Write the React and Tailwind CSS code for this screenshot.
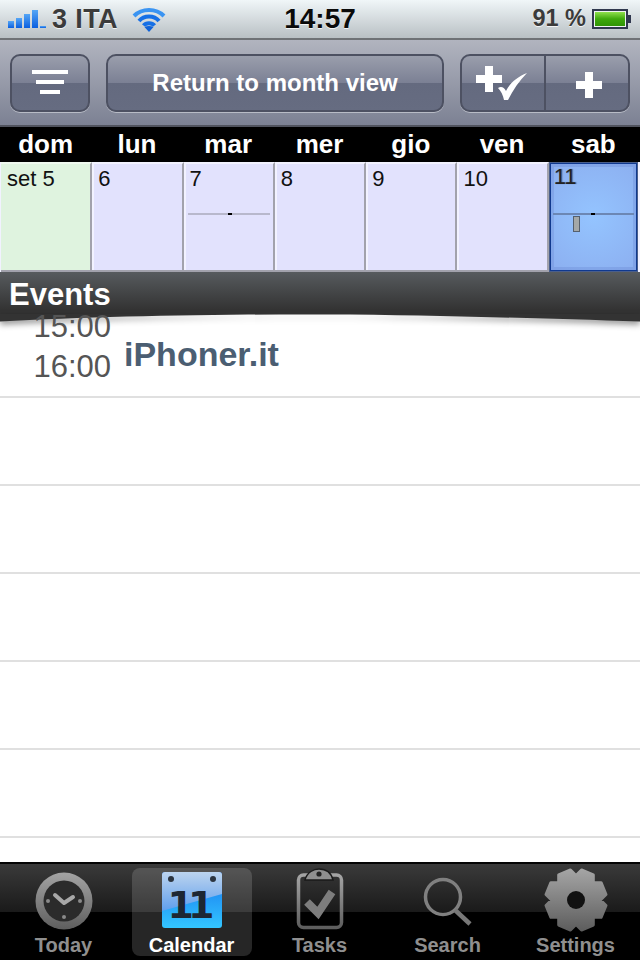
import React from "react";

const gearPath = (() => {
  const cx = 64, cy = 32, teeth = 8, pts = [];
  for (let i = 0; i < teeth; i++) {
    const a = (i / teeth) * Math.PI * 2 + Math.PI / 8 - Math.PI / 2;
    const step = (Math.PI * 2) / teeth;
    [[-0.5, 24.5], [-0.27, 30.5], [0.27, 30.5], [0.5, 24.5]].forEach(([o, r]) => {
      pts.push([cx + r * Math.cos(a + o * step), cy + r * Math.sin(a + o * step)]);
    });
  }
  return "M" + pts.map((p) => p[0].toFixed(1) + " " + p[1].toFixed(1)).join("L") + "Z";
})();

const GreyDefs = ({ id }) => (
  <defs>
    <linearGradient id={id} x1="0" y1="0" x2="0" y2="1">
      <stop offset="0" stopColor="#a4a4a4" />
      <stop offset="1" stopColor="#5e5e5e" />
    </linearGradient>
  </defs>
);

function ClockIcon() {
  return (
    <svg width="128" height="64" viewBox="0 0 128 64" className="block">
      <GreyDefs id="clockG" />
      <circle cx="64" cy="33" r="28.5" fill="url(#clockG)" />
      <circle cx="64" cy="33" r="20.5" fill="#2b2b2b" />
      <path d="M55 27 L64 35 L73 29" fill="none" stroke="#a8a8a8" strokeWidth="4" strokeLinecap="round" strokeLinejoin="round" />
      <circle cx="48" cy="33" r="2" fill="#8a8a8a" />
      <circle cx="80" cy="33" r="2" fill="#8a8a8a" />
      <circle cx="64" cy="49" r="2" fill="#8a8a8a" />
    </svg>
  );
}

function CalendarIcon() {
  return (
    <svg width="128" height="64" viewBox="0 0 128 64" className="block">
      <defs>
        <linearGradient id="calTop" x1="0" y1="0" x2="0" y2="1">
          <stop offset="0" stopColor="#bcd4ef" />
          <stop offset="1" stopColor="#5f9eec" />
        </linearGradient>
        <linearGradient id="calBot" x1="0" y1="0" x2="0" y2="1">
          <stop offset="0" stopColor="#1673ee" />
          <stop offset="1" stopColor="#33c6ff" />
        </linearGradient>
      </defs>
      <rect x="34" y="4" width="60" height="56" rx="3" fill="url(#calBot)" />
      <path d="M34 7a3 3 0 0 1 3-3h54a3 3 0 0 1 3 3v19L34 43Z" fill="url(#calTop)" />
      <circle cx="43" cy="11" r="3" fill="#2b3440" />
      <circle cx="85" cy="11" r="3" fill="#2b3440" />
      <text x="39.5" y="50" fontFamily="'DejaVu Sans', sans-serif" fontWeight="700" fontSize="38" letterSpacing="-5.9" fill="#1d2733">11</text>
    </svg>
  );
}

function TasksIcon() {
  return (
    <svg width="128" height="64" viewBox="0 0 128 64" className="block">
      <GreyDefs id="taskG" />
      <rect x="42.5" y="7" width="43" height="52.5" rx="5" fill="none" stroke="url(#taskG)" strokeWidth="3.5" />
      <path d="M49 12 C51 4 58 1 63 1 C69 1 75 4 77 12 Z" fill="#8f8f8f" stroke="#1a1a1a" strokeWidth="1.5" />
      <circle cx="63" cy="6" r="2.6" fill="#222" />
      <path d="M51 34 L62 45 L76 24" fill="none" stroke="#7d7d7d" strokeWidth="8" />
    </svg>
  );
}

function SearchIcon() {
  return (
    <svg width="128" height="64" viewBox="0 0 128 64" className="block">
      <circle cx="59" cy="29" r="17.5" fill="none" stroke="#808080" strokeWidth="3.5" />
      <path d="M71 42 L86 56" stroke="#787878" strokeWidth="4.5" />
    </svg>
  );
}

function GearIcon() {
  return (
    <svg width="128" height="64" viewBox="0 0 128 64" className="block">
      <GreyDefs id="gearG" />
      <path d={gearPath} fill="url(#gearG)" stroke="url(#gearG)" strokeWidth="3" strokeLinejoin="round" />
      <circle cx="64" cy="32" r="9" fill="#111" />
    </svg>
  );
}

const tabs = [
  { label: "Today", Icon: ClockIcon },
  { label: "Calendar", Icon: CalendarIcon, active: true },
  { label: "Tasks", Icon: TasksIcon },
  { label: "Search", Icon: SearchIcon },
  { label: "Settings", Icon: GearIcon },
];

const days = ["dom", "lun", "mar", "mer", "gio", "ven", "sab"];
const cells = ["set 5", "6", "7", "8", "9", "10", "11"];

const btn =
  "h-[58px] rounded-[10px] border-2 border-[#4d5162] bg-[linear-gradient(to_bottom,#9a9eac_0%,#7b8094_50%,#646a7f_50%,#666c81_100%)] shadow-[0_1px_0_#b8bcc6]";

function Cell({ text, i }) {
  if (i === 6) {
    return (
      <div className="relative h-[110px] w-[89px] border-2 border-[#10398f] outline outline-1 -outline-offset-1 outline-[#4a5f8c] bg-[radial-gradient(circle_at_50%_50%,#94c4ff_0%,#8caff0_100%)] pl-[3px] text-[22px] leading-[26px] text-[#222] shadow-[inset_0_0_0_3px_rgba(90,120,200,0.25)] [text-shadow:1px_0_1px_rgba(0,0,0,0.4)]">
        {text}
        <span className="absolute left-[2px] right-[2px] top-[49px] h-[2px] bg-[#6c87b4]" />
        <span className="absolute left-[40px] top-[49px] h-[2px] w-[4px] bg-black" />
        <span className="absolute left-[22px] top-[52px] h-[16px] w-[7px] border border-[#55606e] bg-[#a4a8a8]" />
      </div>
    );
  }
  return (
    <div
      className={`relative h-[110px] border-r-2 border-b-2 border-[#a2a2ac] pl-[6px] pt-px text-[22px] leading-[28px] text-[#111] ${
        i === 0
          ? "border-t-2 border-t-[#eef8ee] bg-[#dff3df]"
          : "border-t-2 border-t-[#f2f2ff] bg-[#e2e2fd] shadow-[inset_2px_0_0_#f2f2ff]"
      }`}
    >
      {text}
      {i === 2 && (
        <>
          <span className="absolute left-[4px] right-[3px] top-[49px] h-[2px] bg-[#b8b8cc]" />
          <span className="absolute left-[44px] top-[49px] h-[2px] w-[4px] bg-black" />
        </>
      )}
    </div>
  );
}

export default function App() {
  return (
    <div className="relative flex h-[960px] w-[640px] flex-col overflow-hidden bg-white font-['Liberation_Sans',Arial,sans-serif]">
      {/* Status bar */}
      <div className="grid h-[40px] shrink-0 grid-cols-[1fr_auto_1fr] items-center border-b-2 border-[#6f7276] bg-[linear-gradient(to_bottom,#f0f6f8,#b9c0c4)] px-2 [text-shadow:0_1px_0_rgba(255,255,255,0.8)]">
        <div className="flex items-center">
          <svg width="38" height="20" viewBox="0 0 38 20" className="block">
            <defs>
              <linearGradient id="sig" x1="0" y1="0" x2="0" y2="1">
                <stop offset="0" stopColor="#55a6f5" />
                <stop offset="1" stopColor="#0a5fe0" />
              </linearGradient>
            </defs>
            <rect x="0" y="12" width="6" height="7" fill="url(#sig)" />
            <rect x="8" y="9" width="6" height="10" fill="url(#sig)" />
            <rect x="16" y="5" width="6" height="14" fill="url(#sig)" />
            <rect x="24" y="1" width="6" height="18" fill="url(#sig)" />
            <rect x="32" y="17" width="6" height="2" fill="url(#sig)" />
          </svg>
          <span className="ml-[6px] text-[27px] font-bold leading-none tracking-[0.4px] text-[#3b3b3b]">3 ITA</span>
          <svg width="34" height="26" viewBox="0 0 34 26" className="ml-[14px] mt-[1px] block">
            <g fill="none" stroke="#1670e6" strokeWidth="4">
              <path d="M2 9 C10 1 24 1 32 9" stroke="#3a94f2" />
              <path d="M7 14 C12 8 22 8 27 14" />
              <path d="M11.5 18.5 C14 15.5 20 15.5 22.5 18.5" />
            </g>
            <path d="M17 25 L12.5 20 C15 18.5 19 18.5 21.5 20 Z" fill="#0f62d8" />
          </svg>
        </div>
        <span className="text-[28px] font-bold leading-none text-[#0a0a0a]">14:57</span>
        <div className="flex items-center justify-end">
          <span className="text-[23.5px] font-bold leading-none text-[#3b3b3b]">91 %</span>
          <svg width="40" height="22" viewBox="0 0 40 22" className="ml-[6px] block">
            <defs>
              <linearGradient id="bat" x1="0" y1="0" x2="0" y2="1">
                <stop offset="0" stopColor="#8fe04d" />
                <stop offset="0.5" stopColor="#3ea80c" />
                <stop offset="1" stopColor="#2f9405" />
              </linearGradient>
            </defs>
            <rect x="1" y="2" width="34" height="18" fill="#eef2f2" stroke="#30384e" strokeWidth="2" />
            <rect x="3" y="4" width="30" height="14" fill="url(#bat)" />
            <rect x="36" y="7" width="3" height="8" fill="#30384e" />
          </svg>
        </div>
      </div>

      {/* Toolbar */}
      <div className="flex h-[87px] shrink-0 items-start gap-4 border-b-2 border-[#50535e] bg-[linear-gradient(to_bottom,#b1b4bf,#7c8193)] px-[10px] pt-[14px]">
        <button className={`${btn} flex w-[80px] flex-col items-center justify-center gap-[6px] pb-[2px]`}>
          <span className="h-[4px] w-[36px] bg-white" />
          <span className="h-[4px] w-[28px] bg-white" />
          <span className="h-[4px] w-[20px] bg-white" />
        </button>
        <button className={`${btn} flex-1 text-[24px] font-bold text-white`}>
          Return to month view
        </button>
        <div className={`${btn} flex w-[170px]`}>
          <div className="flex w-[84px] items-center justify-center border-r-2 border-[#4d5162]">
            <svg width="56" height="40" viewBox="0 0 56 40" className="block">
              <path d="M10 3h8v9h9v8h-9v9h-8v-9H1v-8h9z" fill="#fff" />
              <path d="M23 25 C26 23 29 24 31 28 C35 20 42 14 52 10 C44 18 38 27 33 37 L29 37 C28 32 26 28 23 25Z" fill="#fff" />
            </svg>
          </div>
          <div className="flex flex-1 items-center justify-center pl-[4px] pt-[4px]">
            <svg width="26" height="26" viewBox="0 0 26 26" className="block">
              <path d="M9 0h8v9h9v8h-9v9H9v-9H0V9h9z" fill="#fff" />
            </svg>
          </div>
        </div>
      </div>

      {/* Weekdays */}
      <div className="grid h-[35px] shrink-0 grid-cols-7 bg-black pr-px">
        {days.map((d) => (
          <div key={d} className="text-center text-[26px] font-bold leading-[35px] text-white">
            {d}
          </div>
        ))}
      </div>

      {/* Week cells */}
      <div className="grid h-[110px] shrink-0 grid-cols-7 bg-[#f2f2ff] pl-[1px]">
        {cells.map((c, i) => (
          <Cell key={c} text={c} i={i} />
        ))}
      </div>

      {/* Events header */}
      <div className="relative h-[42px] shrink-0 bg-[linear-gradient(to_bottom,#575b5e,#333333_90%)] pl-[9px] text-[31px] font-bold leading-[45px] text-white">
        Events
        <svg width="640" height="8" viewBox="0 0 640 8" className="absolute left-0 top-full block drop-shadow-[0_3px_3px_rgba(0,0,0,0.45)]">
          <path d="M0 0H640V7.5C560 5 470 2 350 0.5C230 0 100 2 0 7.5Z" fill="#333333" />
        </svg>
      </div>

      {/* Event list */}
      <div className="relative z-10 -mt-[2px] min-h-0 flex-1">
        <div className="flex h-[86px] items-start border-b-2 border-[#e0e0e0]">
          <div className="-mt-[5px] w-[111px] text-right text-[31px] leading-[40px] text-[#555]">
            <div>15:00</div>
            <div>16:00</div>
          </div>
          <div className="ml-[13px] mt-[22px] text-[34px] font-bold leading-[40px] text-[#4b5e72]">iPhoner.it</div>
        </div>
        {[0, 1, 2, 3, 4].map((n) => (
          <div key={n} className="h-[88px] border-b-2 border-[#e0e0e0]" />
        ))}
      </div>

      {/* Tab bar */}
      <div className="relative z-20 grid h-[98px] shrink-0 grid-cols-5 border-t-2 border-[#050505] bg-[linear-gradient(to_bottom,#3a3a3a_0%,#1a1a1a_50%,#000_50%,#000_100%)] pt-[4px]">
        {tabs.map(({ label, Icon, active }) => (
          <div key={label} className="relative flex flex-col items-center">
            {active && <span className="absolute inset-x-[4px] bottom-[4px] top-0 rounded-[8px] bg-white/15" />}
            <div className="relative">
              <Icon />
            </div>
            <span
              className={`relative -ml-[1px] mt-px text-[20px] font-bold leading-[24px] ${
                active ? "text-white" : "text-[#8f8f8f]"
              }`}
            >
              {label}
            </span>
          </div>
        ))}
      </div>
    </div>
  );
}
